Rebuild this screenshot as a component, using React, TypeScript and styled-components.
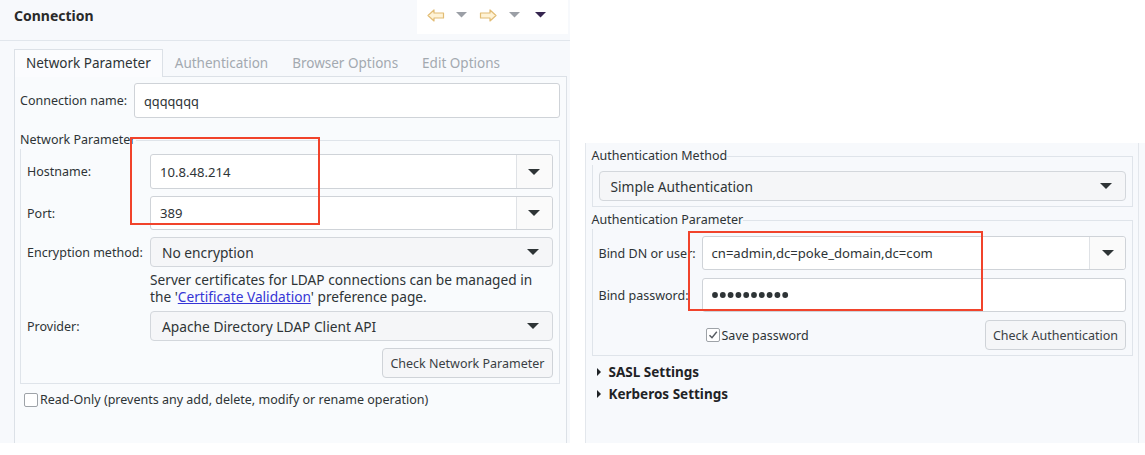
import React from 'react';
import styled, { createGlobalStyle } from 'styled-components';

const GlobalStyle = createGlobalStyle`
  html, body {
    margin: 0;
    padding: 0;
    background: #ffffff;
  }
  body {
    font-family: "Noto Sans", "Open Sans", sans-serif;
    font-size: 12.5px;
    color: #2e3436;
  }
`;

const Page = styled.div`
  position: relative;
  width: 1145px;
  height: 455px;
  display: flex;
  align-items: flex-start;
  background: #ffffff;
  overflow: hidden;
`;

/* ---------- left editor ---------- */

const LeftPanel = styled.div`
  width: 570px;
  height: 443px;
  display: flex;
  flex-direction: column;
  background: #f7f9fc;
`;

const Header = styled.div`
  height: 40px;
  flex: 0 0 auto;
  display: flex;
  justify-content: space-between;
  border-bottom: 1px solid #e1e6ec;
`;

const Title = styled.div`
  padding: 6px 0 0 14px;
  font-size: 14px;
  font-weight: 700;
  line-height: 20px;
  color: #2a2a2a;
`;

const Toolbar = styled.div`
  width: 151px;
  height: 34px;
  margin-right: 2px;
  background: #ffffff;
  display: flex;
  align-items: center;
  padding-left: 10px;
  box-sizing: border-box;
`;

const ToolIcon = styled.span<{ $w: number }>`
  display: inline-flex;
  width: ${(p) => p.$w}px;
  justify-content: center;
  margin-top: -4px;
`;

const TabFolder = styled.div`
  flex: 1 1 auto;
  margin: 8px 3px 0 14px;
  display: flex;
  flex-direction: column;
`;

const TabRow = styled.div`
  display: flex;
  height: 27px;
  flex: 0 0 auto;
`;

const Tab = styled.div<{ $active?: boolean }>`
  padding: 0 11px;
  line-height: 26px;
  font-size: 13.5px;
  white-space: nowrap;
  color: ${(p) => (p.$active ? '#2e3436' : '#a3a9b0')};
  background: ${(p) => (p.$active ? '#fbfcfe' : 'transparent')};
  border: 1px solid ${(p) => (p.$active ? '#dce1e7' : 'transparent')};
  border-bottom: none;
  margin-bottom: -1px;
  position: relative;
  z-index: 1;
`;

const TabBody = styled.div`
  flex: 1 1 auto;
  background: #f9fbfd;
  border: 1px solid #dce1e7;
  border-bottom: none;
  padding: 6px 6px 0 5px;
`;

const FieldRow = styled.div`
  display: flex;
  align-items: center;
`;

const Label = styled.div<{ $w: number }>`
  width: ${(p) => p.$w}px;
  flex: 0 0 auto;
  white-space: nowrap;
`;

const TextBox = styled.div<{ $h: number }>`
  flex: 1 1 auto;
  height: ${(p) => p.$h}px;
  box-sizing: border-box;
  background: #ffffff;
  border: 1px solid #cfd3d8;
  border-radius: 3px;
  display: flex;
  align-items: center;
  padding-left: 9px;
  font-size: 12.75px;
`;

const Group = styled.fieldset<{ $mt: number }>`
  margin: ${(p) => p.$mt}px 0 0;
  padding: 0 6px 5px 6px;
  border: 1px solid #dfe4ea;
  min-width: 0;
`;

const Legend = styled.legend`
  padding: 0;
  margin-left: -7px;
  line-height: 18px;
  white-space: nowrap;
`;

const FormGrid = styled.div<{ $col: number; $gap: number; $mt: number }>`
  display: grid;
  grid-template-columns: ${(p) => p.$col}px 1fr;
  row-gap: ${(p) => p.$gap}px;
  align-items: center;
  margin-top: ${(p) => p.$mt}px;
`;

const EditCombo = styled.div<{ $h: number }>`
  height: ${(p) => p.$h}px;
  box-sizing: border-box;
  background: #ffffff;
  border: 1px solid #cfd3d8;
  border-radius: 3px;
  display: flex;
  align-items: stretch;
`;

const ComboText = styled.div`
  flex: 1 1 auto;
  display: flex;
  align-items: center;
  padding-left: 9px;
  font-size: 13.1px;
  white-space: nowrap;
`;

const ComboButton = styled.div`
  width: 35px;
  flex: 0 0 auto;
  border-left: 1px solid #dfe2e6;
  background: #fafafa;
  border-radius: 0 3px 3px 0;
  display: flex;
  align-items: center;
  justify-content: center;
`;

const SelectBox = styled.div<{ $mt?: number }>`
  height: 30px;
  box-sizing: border-box;
  margin-top: ${(p) => p.$mt ?? 0}px;
  background: #f5f6f8;
  border: 1px solid #d3d7dc;
  border-radius: 4px;
  display: flex;
  align-items: center;
  justify-content: space-between;
  padding: 0 13px 0 11px;
  font-size: 13.75px;
  white-space: nowrap;
`;

const Arrow = styled.span`
  width: 0;
  height: 0;
  border-left: 6px solid transparent;
  border-right: 6px solid transparent;
  border-top: 6px solid #2e3436;
`;

const Help = styled.div`
  grid-column: 2;
  font-size: 13.7px;
  line-height: 17px;
  margin: -3px 0 -1px;
  white-space: nowrap;
`;

const Link = styled.a`
  color: #3535d6;
  text-decoration: underline;
`;

const Button = styled.div`
  height: 30px;
  box-sizing: border-box;
  padding: 0 7px;
  background: #f5f6f8;
  border: 1px solid #cfd3d8;
  border-radius: 4px;
  display: inline-flex;
  align-items: center;
  white-space: nowrap;
  color: #3a3f44;
`;

const ButtonCell = styled.div<{ $spread?: boolean }>`
  grid-column: 2;
  display: flex;
  justify-content: ${(p) => (p.$spread ? 'space-between' : 'flex-end')};
  align-items: center;
`;

const CheckRow = styled.label<{ $ml: number; $mt: number }>`
  display: flex;
  align-items: center;
  gap: 2px;
  margin: ${(p) => p.$mt}px 0 0 ${(p) => p.$ml}px;
  line-height: 17px;
  white-space: nowrap;
`;

const Box = styled.span`
  width: 12px;
  height: 12px;
  flex: 0 0 auto;
  border: 1px solid #9ea3a8;
  border-radius: 2px;
  background: #ffffff;
  display: inline-flex;
  align-items: center;
  justify-content: center;
`;

/* ---------- right editor ---------- */

const RightPanel = styled.div`
  margin: 143px 0 0 15px;
  width: 560px;
  height: 300px;
  display: flex;
  background: #f7f9fc;
  border-left: 1px solid #e3e7ec;
`;

const RightContent = styled.div`
  flex: 1 1 auto;
  margin-right: 6px;
  border-right: 1px solid #e3e7ec;
  padding: 4px 5px 0 6px;
`;

const Sections = styled.div`
  margin-top: 5px;
`;

const Section = styled.div`
  display: flex;
  align-items: center;
  gap: 8px;
  padding-left: 5px;
  line-height: 22px;
  font-size: 13.5px;
  font-weight: 700;
  color: #1f2326;
`;

const Twisty = styled.span`
  width: 0;
  height: 0;
  border-top: 4px solid transparent;
  border-bottom: 4px solid transparent;
  border-left: 4px solid #1f2326;
`;

const Annotation = styled.div<{ $x: number; $y: number; $w: number; $h: number }>`
  position: absolute;
  left: ${(p) => p.$x}px;
  top: ${(p) => p.$y}px;
  width: ${(p) => p.$w}px;
  height: ${(p) => p.$h}px;
  box-sizing: border-box;
  border: 2px solid #f1432b;
  pointer-events: none;
`;

const BackIcon = ({ flip }: { flip?: boolean }) => (
  <svg width="18" height="13" viewBox="0 0 18 13" style={flip ? { transform: 'scaleX(-1)' } : undefined}>
    <path
      d="M1 6.5 L7 1 V4 H16.5 V9 H7 V12 Z"
      fill="#fff3d6"
      stroke="#e2bc74"
      strokeWidth="1.2"
      strokeLinejoin="round"
    />
  </svg>
);

const Tri = ({ color, w }: { color: string; w: number }) => (
  <svg width={w} height={w / 2 + 1} viewBox={`0 0 ${w} ${w / 2 + 1}`}>
    <path d={`M0 0 H${w} L${w / 2} ${w / 2} Z`} fill={color} />
  </svg>
);

const Dots = ({ count }: { count: number }) => (
  <svg width={count * 7.8} height="8" viewBox={`0 0 ${count * 7.8} 8`}>
    {Array.from({ length: count }).map((_, i) => (
      <circle key={i} cx={3 + i * 7.8} cy={4} r={2.9} fill="#2e3436" />
    ))}
  </svg>
);

export default function App() {
  return (
    <>
      <GlobalStyle />
      <Page>
        <LeftPanel>
          <Header>
            <Title>Connection</Title>
            <Toolbar>
              <ToolIcon $w={18}>
                <BackIcon />
              </ToolIcon>
              <ToolIcon $w={34}>
                <Tri color="#9b9fa6" w={11} />
              </ToolIcon>
              <ToolIcon $w={18}>
                <BackIcon flip />
              </ToolIcon>
              <ToolIcon $w={36}>
                <Tri color="#9b9fa6" w={11} />
              </ToolIcon>
              <ToolIcon $w={16}>
                <Tri color="#35254f" w={11} />
              </ToolIcon>
            </Toolbar>
          </Header>

          <TabFolder>
            <TabRow>
              <Tab $active>Network Parameter</Tab>
              <Tab>Authentication</Tab>
              <Tab>Browser Options</Tab>
              <Tab>Edit Options</Tab>
            </TabRow>
            <TabBody>
              <FieldRow>
                <Label $w={114}>Connection name:</Label>
                <TextBox $h={35}>qqqqqqq</TextBox>
              </FieldRow>

              <Group $mt={13}>
                <Legend>Network Parameter</Legend>
                <FormGrid $col={123} $gap={7} $mt={5}>
                  <Label $w={123}>Hostname:</Label>
                  <EditCombo $h={35}>
                    <ComboText>10.8.48.214</ComboText>
                    <ComboButton>
                      <Arrow />
                    </ComboButton>
                  </EditCombo>

                  <Label $w={123}>Port:</Label>
                  <EditCombo $h={34}>
                    <ComboText>389</ComboText>
                    <ComboButton>
                      <Arrow />
                    </ComboButton>
                  </EditCombo>

                  <Label $w={123}>Encryption method:</Label>
                  <SelectBox>
                    No encryption
                    <Arrow />
                  </SelectBox>

                  <Help>
                    Server certificates for LDAP connections can be managed in
                    <br />
                    the '<Link>Certificate Validation</Link>' preference page.
                  </Help>

                  <Label $w={123}>Provider:</Label>
                  <SelectBox>
                    Apache Directory LDAP Client API
                    <Arrow />
                  </SelectBox>

                  <ButtonCell>
                    <Button>Check Network Parameter</Button>
                  </ButtonCell>
                </FormGrid>
              </Group>

              <CheckRow $ml={4} $mt={7}>
                <Box />
                Read-Only (prevents any add, delete, modify or rename operation)
              </CheckRow>
            </TabBody>
          </TabFolder>
        </LeftPanel>

        <RightPanel>
          <RightContent>
            <Group $mt={0}>
              <Legend>Authentication Method</Legend>
              <SelectBox $mt={6}>
                Simple Authentication
                <Arrow />
              </SelectBox>
            </Group>

            <Group $mt={4}>
              <Legend>Authentication Parameter</Legend>
              <FormGrid $col={103} $gap={8} $mt={7}>
                <Label $w={103}>Bind DN or user:</Label>
                <EditCombo $h={34}>
                  <ComboText>cn=admin,dc=poke_domain,dc=com</ComboText>
                  <ComboButton>
                    <Arrow />
                  </ComboButton>
                </EditCombo>

                <Label $w={103}>Bind password:</Label>
                <TextBox $h={34}>
                  <Dots count={10} />
                </TextBox>

                <ButtonCell $spread>
                  <CheckRow $ml={4} $mt={0}>
                    <Box>
                      <svg width="10" height="10" viewBox="0 0 10 10">
                        <path d="M1.5 5.2 L4 7.8 L8.8 1.8" fill="none" stroke="#555a60" strokeWidth="1.4" />
                      </svg>
                    </Box>
                    Save password
                  </CheckRow>
                  <Button>Check Authentication</Button>
                </ButtonCell>
              </FormGrid>
            </Group>

            <Sections>
              <Section>
                <Twisty />
                SASL Settings
              </Section>
              <Section>
                <Twisty />
                Kerberos Settings
              </Section>
            </Sections>
          </RightContent>
        </RightPanel>

        <Annotation $x={130} $y={137} $w={190} $h={88} />
        <Annotation $x={688} $y={231} $w={295} $h={80} />
      </Page>
    </>
  );
}
